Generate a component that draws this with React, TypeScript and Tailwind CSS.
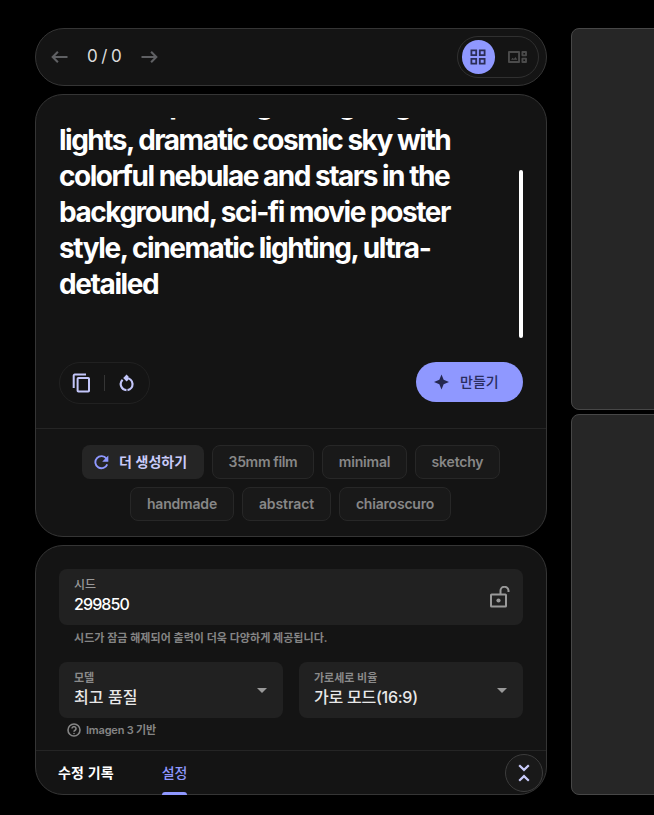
import type { ReactNode } from "react";
import { MdArrowDropDown } from "react-icons/md";

const promptLines = [
  { text: "a starship with glowing engine", cls: "ml-0.5 tracking-[-1.35px] [word-spacing:3px]" },
  { text: "lights, dramatic cosmic sky with", cls: "tracking-[-1.5px]" },
  { text: "colorful nebulae and stars in the", cls: "tracking-[-1.5px]" },
  { text: "background, sci-fi movie poster", cls: "tracking-[-1.47px]" },
  { text: "style, cinematic lighting, ultra-", cls: "tracking-[-1.42px]" },
  { text: "detailed", cls: "tracking-[-1.4px]" },
];

function Arrow({ flip }: { flip?: boolean }) {
  return (
    <svg width="17" height="14" viewBox="0 0 17 14" fill="none" stroke="#5f6063" strokeWidth="2.1" className={flip ? "rotate-180" : ""}>
      <path d="M16.5 7H2M6.9 1.8 1.7 7l5.2 5.2" />
    </svg>
  );
}

function Chip({ children, cls }: { children: ReactNode; cls: string }) {
  return (
    <div className={"flex h-[34px] items-center justify-center rounded-lg border border-[#272727] bg-[#191919] text-sm font-semibold text-[#878787] " + cls}>
      {children}
    </div>
  );
}

function SelectField({ label, value, cls }: { label: string; value: string; cls: string }) {
  return (
    <div className="flex h-14 w-[224px] items-center justify-between rounded-lg bg-[#212121] pr-[9px] pl-[15px]">
      <div className="pb-0.5">
        <div className="text-[11px] leading-[16px] font-bold text-[#8a8a8a]">{label}</div>
        <div className={"text-[16px] leading-[22px] font-medium text-[#e8e8e8] " + cls}>{value}</div>
      </div>
      <MdArrowDropDown className="size-6 text-[#999]" />
    </div>
  );
}

export default function App() {
  return (
    <div className="flex h-[815px] w-[654px] gap-6 overflow-hidden bg-black pt-7 pl-[35px] font-['Inter','Noto_Sans_CJK_KR',sans-serif] whitespace-nowrap">
      <div className="flex w-[512px] shrink-0 flex-col gap-2">
        <header className="flex h-[58px] items-center justify-between rounded-full border border-[#353535] bg-[#141414] pr-[7px] pl-[15px]">
          <div className="flex items-center">
            <Arrow />
            <span className="mr-[19px] ml-[18px] w-[36px] text-center text-[17px] tracking-[-0.6px] text-[#dcdcdc]">0 / 0</span>
            <Arrow flip />
          </div>
          <div className="flex h-[42px] w-[82px] items-center rounded-full border border-[#303030] pl-1">
            <div className="flex h-[34px] w-[33px] items-center justify-center rounded-full bg-[#8f98ff] pr-[2px]">
              <svg width="16" height="16" viewBox="0 0 16 16" fill="none" stroke="#2b2d55" strokeWidth="1.8">
                <path d="M1.4 1.4h4.8v4.8H1.4zM9.8 1.4h4.8v4.8H9.8zM1.4 9.8h4.8v4.8H1.4zM9.8 9.8h4.8v4.8H9.8z" />
              </svg>
            </div>
            <svg className="ml-[13px]" width="19" height="12" viewBox="0 0 19 12" fill="none" stroke="#4b4b4b" strokeWidth="1.9">
              <path d="M.95.95h10.1v10.1H.95zM14.4.95h3.6v3.4h-3.6zM14.4 7.65h3.6v3.4h-3.6z" strokeLinejoin="round" />
              <path d="m3 8.8 1.6-2 1.3 1.2 1.6-2L9.3 8.8z" fill="#4b4b4b" stroke="none" />
            </svg>
          </div>
        </header>

        <section className="flex h-[443px] flex-col rounded-[28px] border border-[#353535] bg-[#141414]">
          <div className="mt-[23px] flex h-[220px] justify-between px-[23px]">
            <div className="flex h-[220px] w-[440px] flex-col overflow-hidden text-[28px] leading-[36px] font-bold text-white">
              <div className="-mt-8 flex flex-col items-start">
                {promptLines.map((line) => (
                  <span key={line.text} className={line.cls}>{line.text}</span>
                ))}
              </div>
            </div>
            <div className="mt-[52px] h-[168px] w-1 rounded-full bg-white" />
          </div>
          <div className="mt-6 flex items-start justify-between px-[23px]">
            <div className="flex h-[42px] w-[91px] items-center rounded-full border border-[#212121]">
              <svg className="ml-3" width="19" height="20" viewBox="0 0 19 20" fill="none" stroke="#c3c6fa" strokeWidth="2">
                <path d="M14 1.6H2.7a1 1 0 0 0-1 1V15" />
                <rect x="5.6" y="5" width="11.4" height="13.5" rx=".8" />
              </svg>
              <div className="ml-[13px] h-4 w-px bg-[#353535]" />
              <svg className="ml-[14px]" width="16" height="18" viewBox="0 0 16 18" fill="none" stroke="#c3c6fa" strokeWidth="2.2">
                <path d="M7.5 4.1a6.1 6.1 0 0 1 1 12.1M7.5 16.2A6.1 6.1 0 0 1 3.6 5.7" />
                <path d="M7.6.6 4.2 4l3.4 3.6 1.6-1.6V2.2z" fill="#c3c6fa" stroke="none" />
              </svg>
            </div>
            <button className="flex h-10 w-[107px] items-center rounded-full bg-[#8f98ff] pl-[18px] text-[14px] font-medium text-[#292c60]">
              <svg width="15" height="16" viewBox="0 0 16 16" fill="#242750">
                <path d="M8 0 10.3 5.7 16 8 10.3 10.3 8 16 5.7 10.3 0 8 5.7 5.7z" />
              </svg>
              <span className="ml-[11px] pb-px leading-5">만들기</span>
            </button>
          </div>
          <div className="mt-6 flex flex-1 flex-col items-center gap-2 border-t border-[#252525] pt-4">
            <div className="flex gap-2">
              <div className="flex h-[34px] w-[122px] items-center rounded-lg bg-[#252525] pl-3 text-[14px] font-bold text-[#c9cbfa]">
                <svg width="15" height="15" viewBox="0 0 15 15" fill="none" stroke="#8f98ff" strokeWidth="1.9">
                  <path d="M12.4 3.6A6.1 6.1 0 1 0 13.2 9.3" />
                  <path d="M14.3.6v6.1H8.2z" fill="#8f98ff" stroke="none" />
                </svg>
                <span className="ml-2.5 pb-[2px] tracking-[0.1px]">더 생성하기</span>
              </div>
              <Chip cls="w-[102px] tracking-[-0.35px]">35mm film</Chip>
              <Chip cls="w-[85px] tracking-[-0.2px]">minimal</Chip>
              <Chip cls="w-[85px] tracking-[-0.2px]">sketchy</Chip>
            </div>
            <div className="mr-px flex gap-2">
              <Chip cls="w-[104px] tracking-[-0.2px]">handmade</Chip>
              <Chip cls="w-[89px] tracking-[-0.1px]">abstract</Chip>
              <Chip cls="w-[112px] tracking-[-0.2px]">chiaroscuro</Chip>
            </div>
          </div>
        </section>

        <section className="flex h-[250px] flex-col rounded-[28px] border border-[#353535] bg-[#141414]">
          <div className="flex h-[204px] flex-col px-[23px] pt-[23px]">
            <div className="flex h-14 shrink-0 items-center justify-between rounded-lg bg-[#212121] pr-[13px] pl-[15px]">
              <div className="pb-0.5">
                <div className="text-[12px] leading-[16px] font-medium text-[#999]">시드</div>
                <div className="text-[16px] leading-[22px] font-medium tracking-[-0.9px] text-white">299850</div>
              </div>
              <svg width="20" height="22" viewBox="0 0 20 22" fill="none" stroke="#999" strokeWidth="2">
                <rect x="1" y="8.5" width="15" height="12" rx=".6" />
                <path d="M10.5 8V5a4 4 0 0 1 8-.5V6" />
                <circle cx="8.5" cy="14.5" r="2.1" fill="#999" stroke="none" />
              </svg>
            </div>
            <div className="mt-[5px] pl-[15px] text-[11px] leading-4 font-bold tracking-[0.05px] text-[#858585]">시드가 잠금 해제되어 출력이 더욱 다양하게 제공됩니다.</div>
            <div className="mt-4 flex justify-between">
              <SelectField label="모델" value="최고 품질" cls="tracking-[0.1px]" />
              <SelectField label="가로세로 비율" value="가로 모드(16:9)" cls="tracking-[-0.25px]" />
            </div>
            <div className="mt-1 flex items-center gap-[5px] pl-2 text-[11px] leading-4 font-semibold tracking-[-0.2px] text-[#858585]">
              <svg width="14" height="14" viewBox="0 0 14 14" fill="none" stroke="#858585" strokeWidth="1.6">
                <circle cx="7" cy="7" r="6" />
                <path d="M5 5.6a2 2 0 1 1 3.1 1.7C7.3 7.8 7 8 7 8.8" />
                <circle cx="7" cy="10.5" r=".8" fill="#858585" stroke="none" />
              </svg>
              <span>Imagen 3 기반</span>
            </div>
          </div>
          <div className="flex h-11 items-start border-t border-[#252525] pl-[22px] text-[14px] leading-[43px] font-bold text-white">
            <span className="w-[104px] tracking-[0.2px]">수정 기록</span>
            <div className="flex h-11 w-[25px] flex-col items-center justify-between text-[#8f98ff]">
              <span className="h-10 font-medium">설정</span>
              <div className="h-[3px] w-[25px] shrink-0 rounded-t-sm bg-[#8f98ff]" />
            </div>
            <div className="mt-[3px] mr-[3px] ml-auto flex size-[38px] items-center justify-center rounded-full border border-[#3c3c3c] bg-[#191919] pr-px">
              <svg width="12" height="18" viewBox="0 0 12 18" fill="none" stroke="#c9cbfa" strokeWidth="2.2">
                <path d="m1.2 1.3 4.8 4.6 4.8-4.6M1.2 16.7 6 12.1l4.8 4.6" />
              </svg>
            </div>
          </div>
        </section>
      </div>

      <div className="flex w-[120px] shrink-0 flex-col gap-1">
        <div className="h-[382px] rounded-lg border border-[#474747] bg-[#262626]" />
        <div className="h-[381px] rounded-lg border border-[#474747] bg-[#262626]" />
      </div>
    </div>
  );
}
